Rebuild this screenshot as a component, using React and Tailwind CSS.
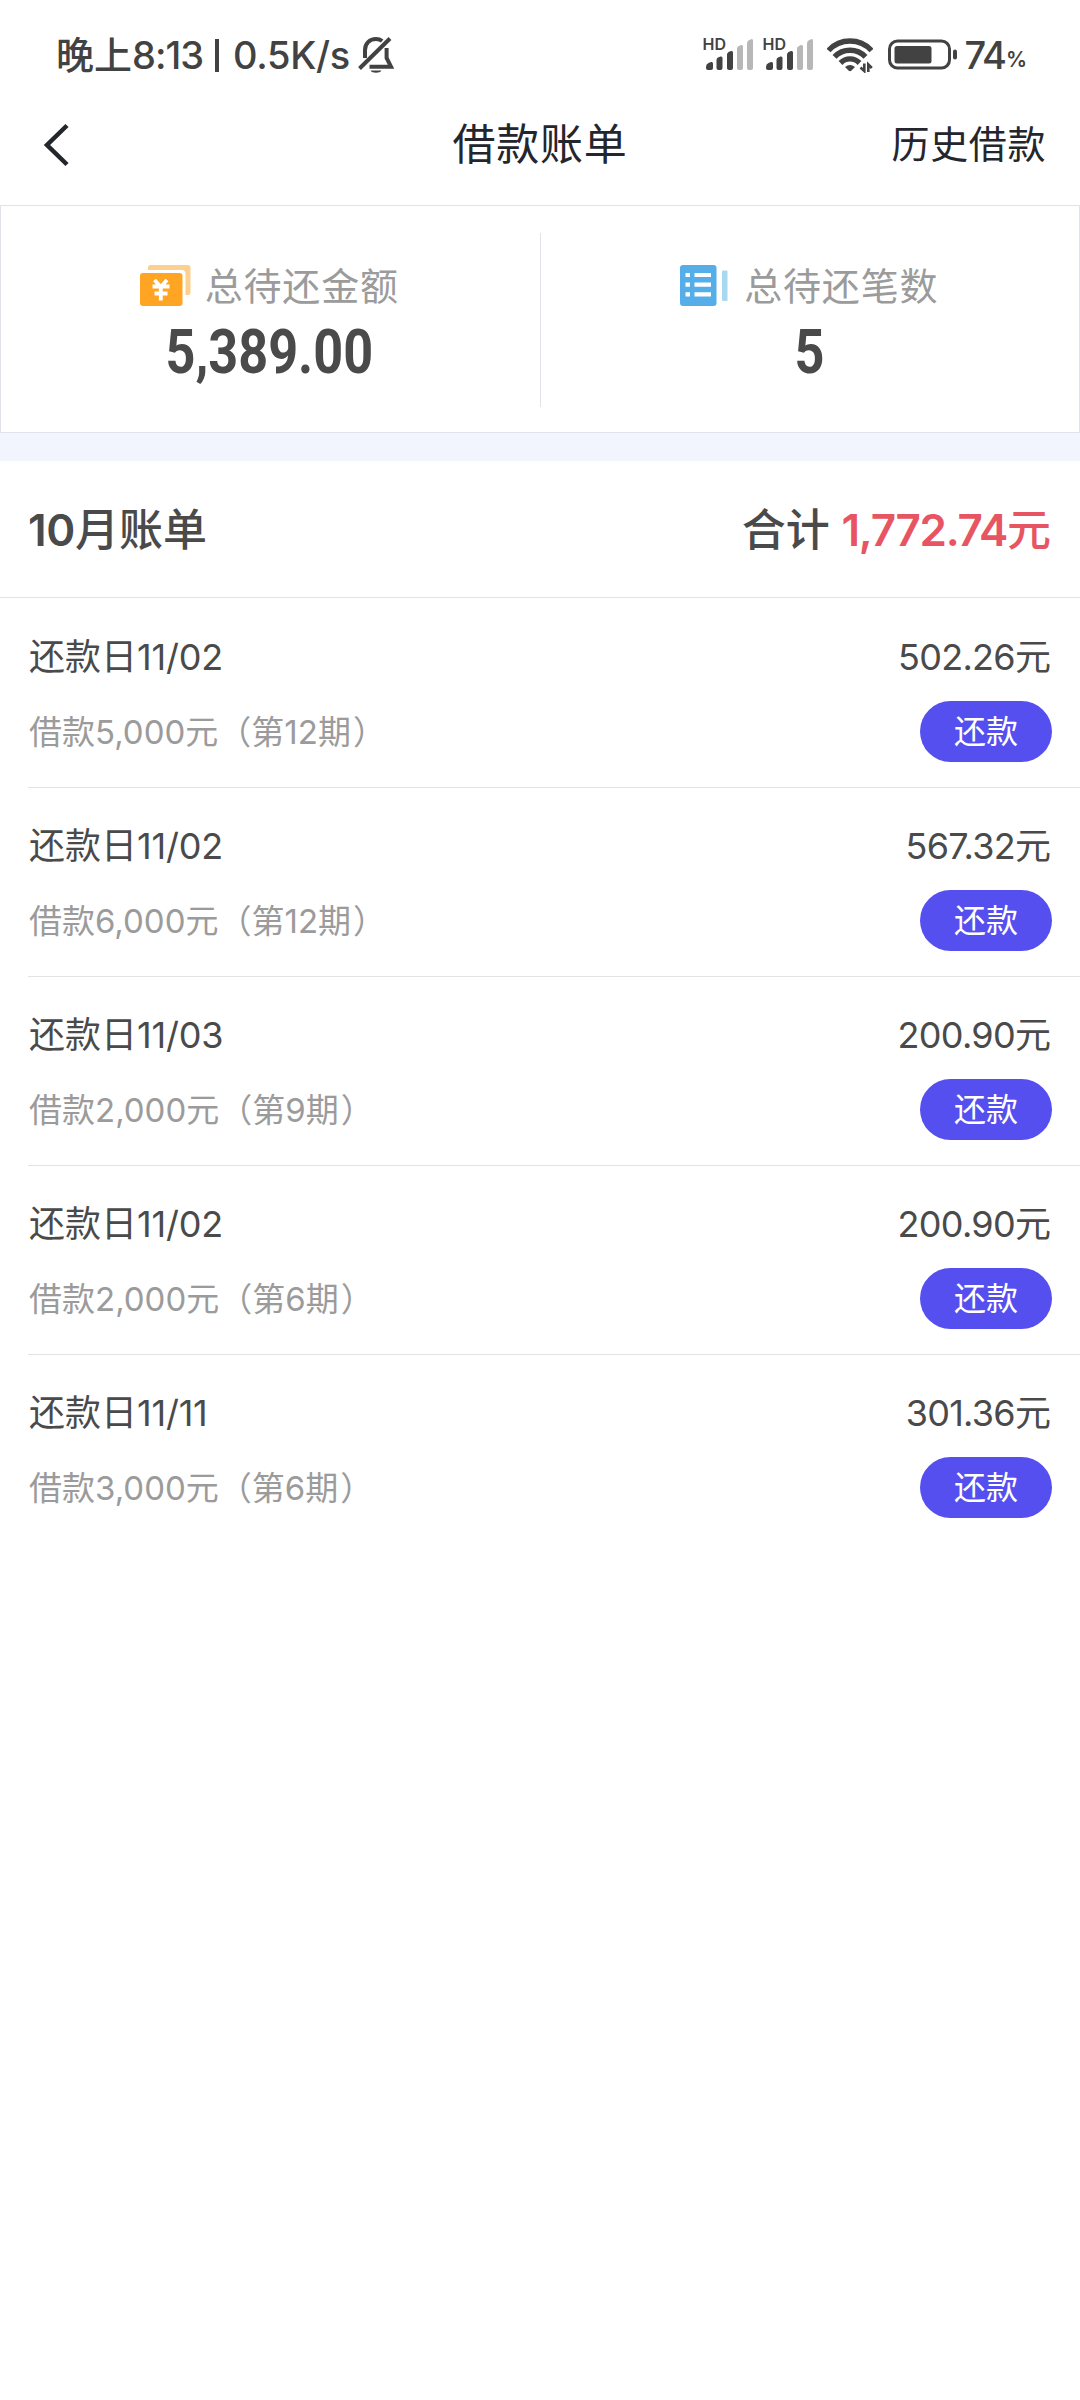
const bills = [
  { date: "11/02", amount: "502.26", loan: "5,000", term: "12" },
  { date: "11/02", amount: "567.32", loan: "6,000", term: "12" },
  { date: "11/03", amount: "200.90", loan: "2,000", term: "9" },
  { date: "11/02", amount: "200.90", loan: "2,000", term: "6" },
  { date: "11/11", amount: "301.36", loan: "3,000", term: "6" },
];

function BellOff() {
  return (
    <svg className="ml-[8px] h-[38px] w-[36px]" viewBox="0 0 36 38" fill="none" stroke="#424242" strokeWidth="4">
      <path d="M7 22V14C7 7.500 11.500 3 18 3C20.500 3 22.500 3.700 24.200 5" />
      <path d="M1.500 32.500L32 2.500" />
      <path d="M28.600 12V22L33 30.700H11.500" />
      <path d="M12.500 34.500H23.500C22 37.500 14 37.500 12.500 34.500Z" fill="#424242" stroke="none" />
    </svg>
  );
}

function Signal() {
  return (
    <div className="relative">
      <svg className="h-[36px] w-[52px]" viewBox="0 0 52 36">
        <g fill="#424242">
          <path d="M3 30Q3 27 5.500 26L8 25Q10 24.500 10 26.500V31Q10 33 8 33H5Q3 33 3 31Z" />
          <path d="M13.500 23Q13.500 21 15 20.500L17.500 19.500Q19.500 19 19.500 21V31Q19.500 33 17.500 33H15.500Q13.500 33 13.500 31Z" />
          <path d="M24 17.500Q24 16 25.500 15L28 14Q30 13.500 30 15.500V31Q30 33 28 33H26Q24 33 24 31Z" />
        </g>
        <g fill="#b7b7b7">
          <path d="M34 12Q34 10 35.500 9.300L38 8Q40 7.500 40 9.500V31Q40 33 38 33H36Q34 33 34 31Z" />
          <path d="M44 6.500Q44 4.500 45.500 3.500L48 2.300Q50 1.500 50 4V31Q50 33 48 33H46Q44 33 44 31Z" />
        </g>
      </svg>
      <span className="absolute top-[-3px] left-[-1px] text-[16px] leading-[20px] font-semibold">HD</span>
    </div>
  );
}

function Wifi() {
  return (
    <svg className="ml-[12px] h-[36px] w-[46px]" viewBox="0 0 46 36" fill="none" stroke="#424242" strokeWidth="5.400">
      <path d="M1.500 13.500C13 0.800 33 0.800 44.500 13.500" />
      <path d="M7.500 19.800C16 11 30 11 38.500 19.800" />
      <path d="M13.500 26C19 20.500 27 20.500 32.500 26" />
      <path d="M18 30Q23 26 28 30L24.500 33.500Q23 34.800 21.500 33.500Z" fill="#424242" stroke="none" />
      <path d="M37.300 26.500V34L33.500 30.500M41.300 35V27.500L44.800 31" strokeWidth="2.600" />
    </svg>
  );
}

function Battery() {
  return (
    <svg className="ml-[15px] h-[32px] w-[70px]" viewBox="0 0 70 32">
      <rect x="1.500" y="2" width="60" height="27" rx="8" fill="none" stroke="#424242" strokeWidth="3" />
      <rect x="6.500" y="7" width="37" height="17.500" rx="2.500" fill="#424242" />
      <rect x="65" y="10.500" width="4" height="10" rx="2" fill="#424242" />
    </svg>
  );
}

function MoneyIcon() {
  return (
    <svg className="h-[42px] w-[51px]" viewBox="0 0 51 42">
      <path d="M10.500 0H48Q50.500 0 50.500 2.500V27.500Q50.500 30 48 30H45.500V9Q45.500 5 41.500 5H8V2.500Q8 0 10.500 0Z" fill="#fcd08f" />
      <rect x="0" y="8" width="42.500" height="33" rx="3" fill="#ffa523" />
      <path d="M14.500 15L20.800 22L27 15M12.500 21.500H29.500M14.500 28.500H27.500M20.800 21V35.500" fill="none" stroke="#fff" strokeWidth="3.800" />
    </svg>
  );
}

function ListIcon() {
  return (
    <svg className="h-[42px] w-[51px]" viewBox="0 0 51 42">
      <rect x="1" y="0" width="36.500" height="41" rx="3" fill="#56aee8" />
      <rect x="43" y="5.500" width="5.500" height="30.500" rx="1" fill="#a9d8f1" />
      <path d="M6.500 10H11M15.500 10H32M6.500 19.700H11M15.500 19.700H32M6.500 29.300H11M15.500 29.300H32" stroke="#fff" strokeWidth="4.200" />
    </svg>
  );
}

function Summary({ icon, label, value }) {
  return (
    <div className="flex flex-1 flex-col items-center pt-[59px]">
      <div className="mr-[2px] flex h-[42px] items-start">
        {icon}
        <span className="ml-[14px] text-[38px] leading-[42px] tracking-[0.8px] text-[#9b9b9b]">{label}</span>
      </div>
      <span className="mt-[11px] mr-[1px] scale-x-[0.855] font-[Roboto] text-[61px] leading-[68px] font-bold text-[#4a4a4a]">{value}</span>
    </div>
  );
}

function BillRow({ bill, first }) {
  return (
    <div className={first ? "ml-[28px] h-[189px] border-t border-transparent pr-[28px]" : "ml-[28px] h-[189px] border-t border-[#e3e3e3] pr-[28px]"}>
      <div className="flex justify-between pt-[36px] pl-px text-[36px] leading-[44px] text-[#4a4a4a]">
        <span>还款日<span className="tracking-[-0.2px]">{bill.date}</span></span>
        <span className="mr-[1px]">
          <span className="tracking-[-0.7px]">{bill.amount}</span>元
        </span>
      </div>
      <div className="mt-[22px] flex items-center justify-between">
        <span className="pl-px text-[33px] leading-[60px] text-[#9b9b9b]">借款{bill.loan}元（第{bill.term}期<span className="ml-[2px]">）</span></span>
        <button className="h-[61px] w-[132px] rounded-full bg-[#564ff0] text-[32px] leading-[60px] text-white">还款</button>
      </div>
    </div>
  );
}

export default function App() {
  return (
    <div className="min-h-[2400px] w-[1080px] overflow-hidden bg-white font-[Inter,'Noto_Sans_CJK_SC',sans-serif] whitespace-nowrap">
      <div className="flex h-[102px] items-center pt-[8px] pr-[54px] pl-[56px] text-[38px] text-[#424242]">
        <span className="font-medium">晚上<span className="tracking-[-1px]">8:13</span></span>
        <span className="ml-[12px] h-[33px] w-[4px] bg-[#424242]" />
        <span className="ml-[14px] font-medium tracking-[-0.3px]">0.5K/s</span>
        <BellOff />
        <div className="ml-auto flex items-center">
          <Signal />
          <span className="w-[8px]" />
          <Signal />
          <Wifi />
          <Battery />
          <span className="ml-[6px] text-[38px] font-medium tracking-[-2px]">74</span>
          <span className="mt-[9px] ml-px text-[21px] font-semibold tracking-[-1px]">%</span>
        </div>
      </div>
      <header className="grid h-[103px] grid-cols-3 items-center pr-[34px] pl-[34px] text-[#24262d]">
        <svg className="mt-[-18px] ml-[9px] h-[44px] w-[28px]" viewBox="0 0 28 44" fill="none" stroke="currentColor" strokeWidth="4.500">
          <path d="M24 2.500L4 22L24 41.500" />
        </svg>
        <h1 className="mt-[-19px] text-center text-[43px] tracking-[0.8px]">借款账单</h1>
        <span className="mt-[-19px] text-right text-[38px] tracking-[0.6px]">历史借款</span>
      </header>
      <section className="flex h-[228px] items-stretch border border-[#e0e4e8]">
        <Summary icon={<MoneyIcon />} label="总待还金额" value="5,389.00" />
        <div className="mt-[27px] mb-[25px] w-px bg-[#e0e4e8]" />
        <Summary icon={<ListIcon />} label="总待还笔数" value="5" />
      </section>
      <div className="h-[28px] bg-[#f3f5fe]" />
      <div className="flex h-[137px] items-center justify-between border-b border-[#e3e3e3] px-[28px] pt-px text-[44px] font-medium text-[#4a4a4a]">
        <span><span className="font-semibold tracking-[-0.3px]">10</span>月账单</span>
        <span className="mr-px">
          合计 <span className="text-[#e85562]"><span className="font-semibold tracking-[-1.3px]">1,772.74</span>元</span>
        </span>
      </div>
      {bills.map((bill, i) => (
        <BillRow key={i} bill={bill} first={i === 0} />
      ))}
    </div>
  );
}
